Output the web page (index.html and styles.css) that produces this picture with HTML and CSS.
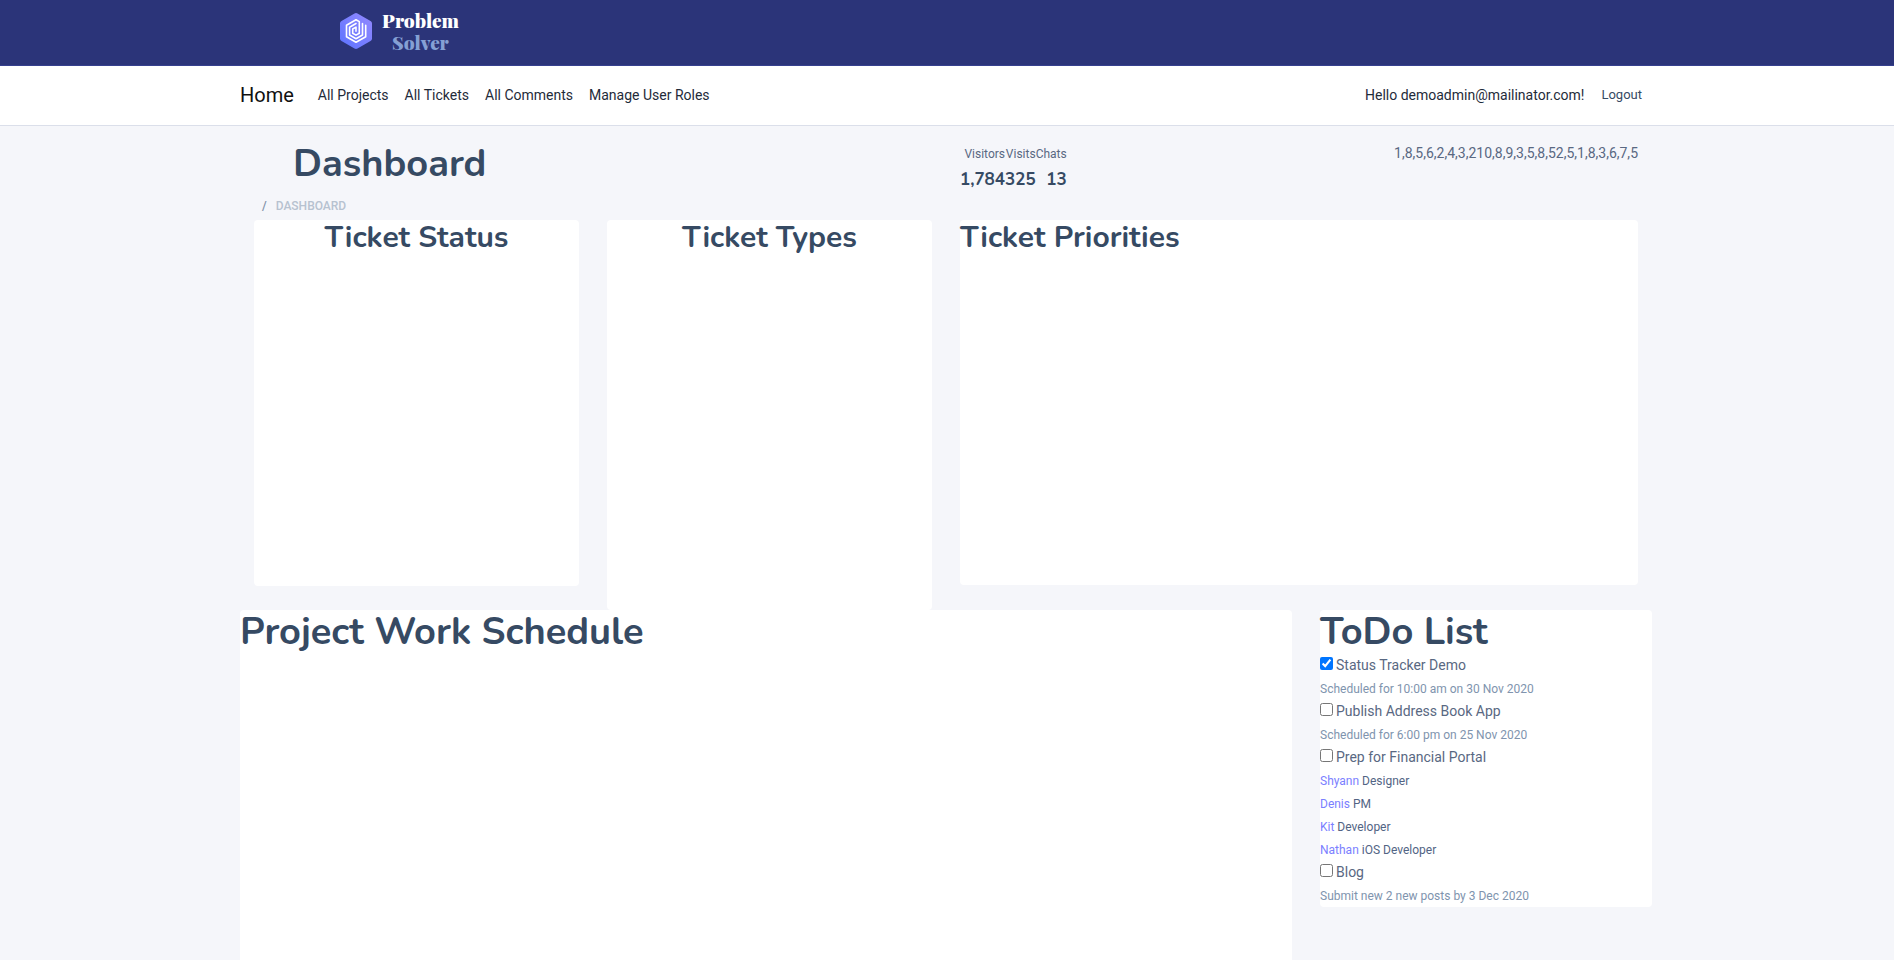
FILE: index.html
```html
<!DOCTYPE html>
<html lang="en">
<head>
<meta charset="utf-8">
<title>Dashboard - Problem Solver</title>
<link rel="stylesheet" href="styles.css">
</head>
<body>
<header class="topbar">
  <div class="container">
    <a class="brand" href="#">
      <svg class="brand-mark" viewBox="0 0 32 36" aria-hidden="true">
        <defs>
          <linearGradient id="mark" x1="1" y1="0" x2="0" y2="1">
            <stop offset="0" stop-color="#9489ff"/>
            <stop offset="1" stop-color="#5b73ff"/>
          </linearGradient>
        </defs>
        <path d="M14.5 .5q1.500-.8 3 0l13 7.500q1.500.8 1.500 2.500v15q0 1.700-1.500 2.500l-13 7.500q-1.500.8-3 0l-13-7.500q-1.500-.8-1.500-2.500v-15q0-1.700 1.500-2.500z" fill="url(#mark)"/>
        <g fill="none" stroke="#fff" stroke-width="1.600" stroke-linejoin="round" stroke-linecap="round">
          <path d="M19.300 20.200V8.600L16 6.700L6.500 12.200V23.700L16 29.200L25.700 23.700V12.300"/>
          <path d="M22.500 10.500V22L16 25.700L9.600 22V14.200L16 10.500"/>
          <path d="M19.300 20.200L16 22.100L12.700 20.200V16L16 14.100V18.200"/>
        </g>
      </svg>
      <span class="brand-name"><span>Problem</span><span class="brand-sub">Solver</span></span>
    </a>
  </div>
</header>
<nav class="navbar">
  <div class="container nav-row">
    <a class="nav-home" href="#">Home</a>
    <ul class="nav-links">
      <li><a href="#">All Projects</a></li>
      <li><a href="#">All Tickets</a></li>
      <li><a href="#">All Comments</a></li>
      <li><a href="#">Manage User Roles</a></li>
    </ul>
    <div class="nav-user">
      <a href="#">Hello demoadmin@mailinator.com!</a>
      <button class="logout" type="button">Logout</button>
    </div>
  </div>
</nav>
<main class="container">
  <section class="inset">
    <div class="page-head">
      <div>
        <h1 class="page-title">Dashboard</h1>
        <div class="breadcrumb"><span class="slash">/</span><span>Dashboard</span></div>
      </div>
      <div class="summary">
        <table class="stats">
          <thead><tr><th>Visitors</th><th>Visits</th><th>Chats</th></tr></thead>
          <tbody><tr><td>1,784</td><td>325</td><td>13</td></tr></tbody>
        </table>
        <span>1,8,5,6,2,4,3,210,8,9,3,5,8,52,5,1,8,3,6,7,5</span>
      </div>
    </div>
    <div class="charts">
      <section class="card status"><h2 class="centered">Ticket Status</h2></section>
      <section class="card types"><h2 class="centered">Ticket Types</h2></section>
      <section class="card priorities"><h2>Ticket Priorities</h2></section>
    </div>
  </section>
  <div class="lower">
    <section class="card schedule"><h1>Project Work Schedule</h1></section>
    <section class="card">
      <h1>ToDo List</h1>
      <label class="task"><input type="checkbox" checked>Status Tracker Demo</label>
      <p class="note"><small>Scheduled for 10:00 am on 30 Nov 2020</small></p>
      <label class="task"><input type="checkbox">Publish Address Book App</label>
      <p class="note"><small>Scheduled for 6:00 pm on 25 Nov 2020</small></p>
      <label class="task"><input type="checkbox">Prep for Financial Portal</label>
      <p class="member"><small><a href="#">Shyann</a> Designer</small></p>
      <p class="member"><small><a href="#">Denis</a> PM</small></p>
      <p class="member"><small><a href="#">Kit</a> Developer</small></p>
      <p class="member"><small><a href="#">Nathan</a> iOS Developer</small></p>
      <label class="task"><input type="checkbox">Blog</label>
      <p class="note"><small>Submit new 2 new posts by 3 Dec 2020</small></p>
    </section>
  </div>
</main>
</body>
</html>
```
FILE: styles.css
```css
* { box-sizing: border-box; }
body {
  margin: 0;
  background: #f5f6fa;
  color: #596882;
  font: 14px/23px Roboto, sans-serif;
}
a { color: inherit; text-decoration: none; }
p { margin: 0; }
small { font-size: 12px; line-height: 20px; }
h1, h2 {
  margin: 0;
  color: #364a63;
  font-family: Nunito, Lato, sans-serif;
  font-weight: 700;
}
h1 { font-size: 38px; line-height: 44px; }
h2 { font-size: 30px; line-height: 35px; }
.container { max-width: 1414px; margin: 0 auto; padding-right: 2px; }

.topbar { background: #2b3479; border-bottom: 1px solid #36408f; padding: 10px 0 13px; }
.brand { display: inline-flex; align-items: center; gap: 10px; margin-left: 100px; height: 42px; vertical-align: top; }
.brand-mark { width: 32px; height: 36px; }
.brand-name {
  display: flex; flex-direction: column; align-items: center;
  color: #fff;
  font: 900 19px/22px "Playfair Display", "DM Serif Display", "Liberation Serif", serif;
}
.brand-sub { color: #85a0d4; }

.navbar { background: #fff; border-bottom: 1px solid #dbdfea; color: #1f2b3a; }
.nav-row { display: flex; align-items: center; height: 59px; }
.nav-home { font-size: 20px; color: #101010; }
.nav-links { display: flex; gap: 16px; list-style: none; margin: 0 0 0 24px; padding: 0; }
.nav-user { display: flex; align-items: center; gap: 17px; margin-left: auto; padding-right: 10px; }
.logout { border: 0; background: none; padding: 0 0 2px; color: #364a63; font: 13px/20px Roboto, sans-serif; }

.inset { padding: 16px 14px 0; }
.page-head { display: grid; grid-template-columns: 1fr 1fr; gap: 28px; }
.page-title { padding-left: 39px; }
.breadcrumb {
  display: flex; gap: 9px; padding: 10px 0 4px 8px;
  color: #b7c2d0; font-size: 12px; line-height: 20px; font-weight: 500;
  text-transform: uppercase;
}
.slash { color: #8091a7; }
.summary { display: flex; justify-content: space-between; align-items: flex-start; }
.stats { border-collapse: collapse; text-align: right; }
.stats th, .stats td { padding: 0; }
.stats th { font-size: 12px; line-height: 24px; font-weight: 400; }
.stats td { color: #364a63; font: 700 17px/27px Nunito, Lato, sans-serif; }

.charts { display: grid; grid-template-columns: 1fr 1fr calc(50% - 14px); gap: 28px; align-items: start; }
.card { background: #fff; border-radius: 4px; }
.centered { text-align: center; }
.status { min-height: 366px; }
.types { min-height: 390px; }
.priorities { min-height: 365px; }
.lower { display: grid; grid-template-columns: 1052fr 332fr; gap: 28px; align-items: start; }
.schedule { min-height: 400px; }
.task { display: flex; align-items: flex-start; gap: 3px; }
.task input { width: 13px; height: 13px; margin: 3px 0 0; accent-color: #0075ff; }
.note { color: #8094ae; }
.member { color: #526484; }
.note, .member { height: 23px; }
.member a { color: #7b80ff; }
```
